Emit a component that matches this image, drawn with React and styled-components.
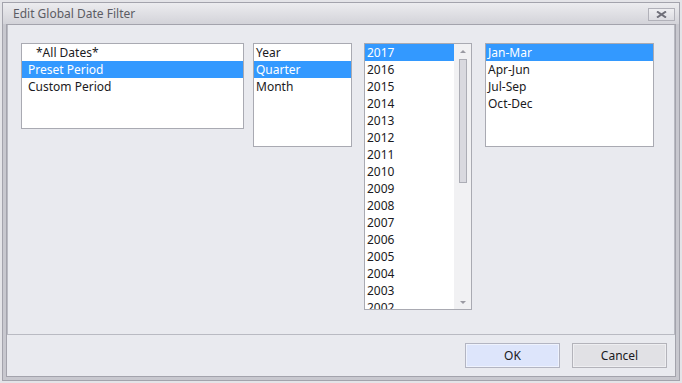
import React from 'react';
import styled, { createGlobalStyle } from 'styled-components';

const GlobalStyle = createGlobalStyle`
  html, body {
    margin: 0;
    padding: 0;
    background: #e6e6ea;
  }
  body {
    font-family: 'Noto Sans', 'Open Sans', sans-serif;
    font-size: 12px;
  }
`;

const Window = styled.div`
  width: 682px;
  height: 383px;
  box-sizing: border-box;
  padding: 2px;
  background: #e4e4e8;
`;

const Frame = styled.div`
  height: 100%;
  box-sizing: border-box;
  border: 1px solid #a3a3ac;
  background: #c8c8cf;
  display: flex;
  flex-direction: column;
`;

const TitleBar = styled.div`
  height: 21px;
  flex: none;
  display: flex;
  align-items: center;
  justify-content: space-between;
  padding: 0 4px 0 10px;
  background: linear-gradient(#ececef, #d3d3d9);
`;

const Title = styled.span`
  color: #5c5c64;
  font-size: 12px;
  line-height: 1;
`;

const CloseButton = styled.div`
  width: 27px;
  height: 13px;
  box-sizing: border-box;
  border: 1px solid #b1b1b9;
  background: linear-gradient(#efeff2, #dcdce1);
  display: flex;
  align-items: center;
  justify-content: center;
  margin-top: 1px;
`;

const ClientWrap = styled.div`
  flex: 1;
  display: flex;
  padding: 0 3px 3px 3px;
`;

const Client = styled.div`
  flex: 1;
  border: 1px solid #a3a3ac;
  background: #e9eaef;
  display: flex;
  flex-direction: column;
`;

const Panel = styled.div`
  flex: 1;
  border: 1px solid #b9bac2;
  border-top: none;
  display: flex;
  align-items: flex-start;
  padding: 18px 0 0 13px;
`;

const ListBox = styled.div`
  width: ${p => p.$w}px;
  height: ${p => p.$h}px;
  margin-right: ${p => p.$gap || 0}px;
  box-sizing: border-box;
  border: 1px solid #a9aab2;
  background: #fff;
  display: flex;
  overflow: hidden;
  flex: none;
`;

const Rows = styled.div`
  flex: 1;
  min-width: 0;
`;

const Row = styled.div`
  height: 17px;
  line-height: 17px;
  padding-left: ${p => p.$indent}px;
  white-space: nowrap;
  color: ${p => (p.$selected ? '#fff' : '#1a1a22')};
  background: ${p => (p.$selected ? '#3399ff' : 'transparent')};
`;

const ScrollTrack = styled.div`
  width: 17px;
  flex: none;
  background: #f1f1f3;
  display: flex;
  flex-direction: column;
  align-items: center;
  padding: 6px 0 5px;
  box-sizing: border-box;
`;

const Arrow = styled.div`
  width: 0;
  height: 0;
  border-left: 3px solid transparent;
  border-right: 3px solid transparent;
  ${p =>
    p.$down
      ? 'border-top: 3px solid #9a9aa2;'
      : 'border-bottom: 3px solid #9a9aa2;'}
`;

const Thumb = styled.div`
  width: 8px;
  height: 124px;
  box-sizing: border-box;
  margin-top: 6px;
  border: 1px solid #acadb5;
  background: #d9d9df;
`;

const Spacer = styled.div`
  flex: 1;
`;

const Footer = styled.div`
  height: 41px;
  flex: none;
  display: flex;
  align-items: center;
  justify-content: flex-end;
  gap: 12px;
  padding-right: 8px;
`;

const Button = styled.div`
  width: 95px;
  height: 25px;
  box-sizing: border-box;
  border: 1px solid ${p => (p.$primary ? '#b3b5c2' : '#b3b3ba')};
  background: ${p => (p.$primary ? '#dde5fb' : '#e1e1e5')};
  box-shadow: inset 0 0 0 1px ${p => (p.$primary ? '#eef2fd' : '#eeeef1')};
  display: flex;
  align-items: center;
  justify-content: center;
  color: #1a1a22;
  font-size: 12px;
`;

const years = [];
for (let y = 2017; y >= 2002; y--) years.push(String(y));

const List = ({ items, selected, w, h, gap, indent = 2, firstIndent, scroll }) => (
  <ListBox $w={w} $h={h} $gap={gap}>
    <Rows>
      {items.map((item, i) => (
        <Row
          key={item}
          $selected={item === selected}
          $indent={i === 0 && firstIndent ? firstIndent : indent}
        >
          {item}
        </Row>
      ))}
    </Rows>
    {scroll && (
      <ScrollTrack>
        <Arrow />
        <Thumb />
        <Spacer />
        <Arrow $down />
      </ScrollTrack>
    )}
  </ListBox>
);

export default function App() {
  return (
    <>
      <GlobalStyle />
      <Window>
        <Frame>
          <TitleBar>
            <Title>Edit Global Date Filter</Title>
            <CloseButton>
              <svg width="11" height="7" viewBox="0 0 11 7">
                <path d="M1 0.5 L10 6.5 M10 0.5 L1 6.5" stroke="#6f6f79" strokeWidth="2" />
              </svg>
            </CloseButton>
          </TitleBar>
          <ClientWrap>
            <Client>
              <Panel>
                <List
                  items={['*All Dates*', 'Preset Period', 'Custom Period']}
                  selected="Preset Period"
                  w={223}
                  h={86}
                  gap={9}
                  indent={6}
                  firstIndent={14}
                />
                <List
                  items={['Year', 'Quarter', 'Month']}
                  selected="Quarter"
                  w={99}
                  h={104}
                  gap={12}
                />
                <List items={years} selected="2017" w={108} h={267} gap={13} scroll />
                <List
                  items={['Jan-Mar', 'Apr-Jun', 'Jul-Sep', 'Oct-Dec']}
                  selected="Jan-Mar"
                  w={169}
                  h={104}
                />
              </Panel>
              <Footer>
                <Button $primary>OK</Button>
                <Button>Cancel</Button>
              </Footer>
            </Client>
          </ClientWrap>
        </Frame>
      </Window>
    </>
  );
}
